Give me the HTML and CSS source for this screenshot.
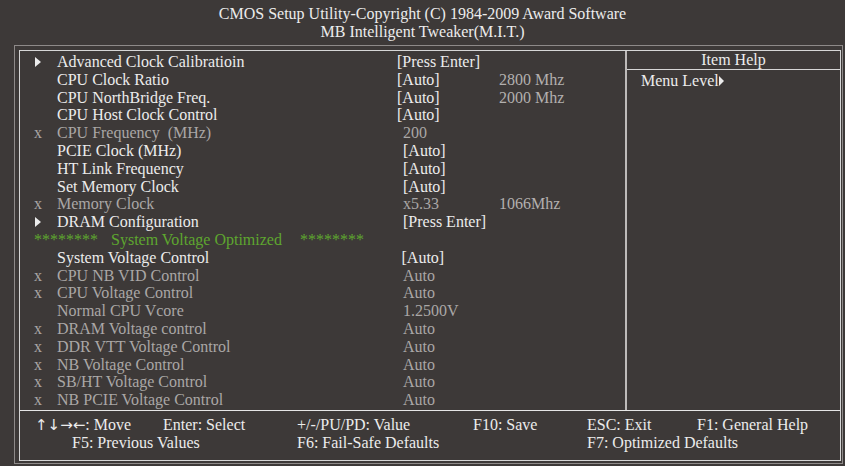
FILE: index.html
```html
<!DOCTYPE html>
<html lang="en">

<head>
    <meta charset="UTF-8">
    <meta name="viewport" content="width=device-width, initial-scale=1.0">
    <title>MB Intelligent Tweaker(M.I.T.)</title>
    <link rel="stylesheet" href="styles.css">
</head>

<body>

    <header class="title">
        <div>CMOS Setup Utility-Copyright (C) 1984-2009 Award Software</div>
        <div>MB Intelligent Tweaker(M.I.T.)</div>
    </header>

    <div class="frame">
        <div class="panel">
            <div class="body">
                <div class="menu">
                    <div class="row"><span class="mark"><svg class="arrow" viewBox="0 0 6 10"><polygon points="0,0 6,5 0,10" /></svg></span><span>Advanced Clock Calibratioin</span><span>[Press Enter]</span><span></span></div>
                    <div class="row"><span class="mark"></span><span>CPU Clock Ratio</span><span>[Auto]</span><span class="info">2800 Mhz</span></div>
                    <div class="row"><span class="mark"></span><span>CPU NorthBridge Freq.</span><span>[Auto]</span><span class="info">2000 Mhz</span></div>
                    <div class="row"><span class="mark"></span><span>CPU Host Clock Control</span><span>[Auto]</span><span></span></div>
                    <div class="row off"><span class="mark">x</span><span>CPU Frequency&nbsp;&nbsp;(MHz)</span><span class="in">200</span><span></span></div>
                    <div class="row"><span class="mark"></span><span>PCIE Clock (MHz)</span><span class="in">[Auto]</span><span></span></div>
                    <div class="row"><span class="mark"></span><span>HT Link Frequency</span><span class="in">[Auto]</span><span></span></div>
                    <div class="row"><span class="mark"></span><span>Set Memory Clock</span><span class="in">[Auto]</span><span></span></div>
                    <div class="row off"><span class="mark">x</span><span>Memory Clock</span><span class="in">x5.33</span><span class="info">1066Mhz</span></div>
                    <div class="row"><span class="mark"><svg class="arrow" viewBox="0 0 6 10"><polygon points="0,0 6,5 0,10" /></svg></span><span>DRAM Configuration</span><span class="in">[Press Enter]</span><span></span></div>
                    <div class="row section"><span class="stars">********</span><span class="section-name">System Voltage Optimized</span><span class="stars">********</span></div>
                    <div class="row"><span class="mark"></span><span>System Voltage Control</span><span class="in-sm">[Auto]</span><span></span></div>
                    <div class="row off"><span class="mark">x</span><span>CPU NB VID Control</span><span class="in">Auto</span><span></span></div>
                    <div class="row off"><span class="mark">x</span><span>CPU Voltage Control</span><span class="in">Auto</span><span></span></div>
                    <div class="row off"><span class="mark"></span><span>Normal CPU Vcore</span><span class="in">1.2500V</span><span></span></div>
                    <div class="row off"><span class="mark">x</span><span>DRAM Voltage control</span><span class="in">Auto</span><span></span></div>
                    <div class="row off"><span class="mark">x</span><span>DDR VTT Voltage Control</span><span class="in">Auto</span><span></span></div>
                    <div class="row off"><span class="mark">x</span><span>NB Voltage Control</span><span class="in">Auto</span><span></span></div>
                    <div class="row off"><span class="mark">x</span><span>SB/HT Voltage Control</span><span class="in">Auto</span><span></span></div>
                    <div class="row off"><span class="mark">x</span><span>NB PCIE Voltage Control</span><span class="in">Auto</span><span></span></div>
                </div>

                <div class="help">
                    <div class="help-title">Item Help</div>
                    <div class="help-text">Menu Level<svg class="level" viewBox="0 0 5 10"><polygon points="0,0 5,5 0,10" /></svg></div>
                </div>
            </div>

            <div class="keys">
                <span><span class="arrows">&uarr;&darr;&rarr;&larr;</span>: Move</span>
                <span>Enter: Select</span>
                <span>+/-/PU/PD: Value</span>
                <span>F10: Save</span>
                <span>ESC: Exit</span>
                <span>F1: General Help</span>
                <span class="key-f5">F5: Previous Values</span>
                <span class="key-f6">F6: Fail-Safe Defaults</span>
                <span class="key-f7">F7: Optimized Defaults</span>
            </div>
        </div>
    </div>

</body>

</html>
```

FILE: styles.css
```css
body {
    margin: 0;
    background-color: #3d3938;
    color: #ececec;
    font-family: "Liberation Serif", "Times New Roman", serif;
    font-size: 16px;
}

.title {
    height: 45px;
    box-sizing: border-box;
    padding-top: 5px;
    text-align: center;
    line-height: 18px;
}

/* Moldura dupla */
.frame {
    margin-left: 14px;
    width: 829px;
    height: 419px;
    box-sizing: border-box;
    border: 1px solid #8e8a89;
    padding: 4px 1px 2px 4px;
}

.panel {
    height: 100%;
    box-sizing: border-box;
    border: 1px solid #d6d6d6;
    display: flex;
    flex-direction: column;
}

.body {
    display: flex;
    height: 359px;
}

.menu {
    width: 605px;
    padding-top: 2px;
}

.row {
    display: grid;
    grid-template-columns: 23px 340px 102px auto;
    padding-left: 14px;
    height: 17.8px;
    line-height: 17.8px;
    white-space: nowrap;
}

.row.off {
    color: #aaa7a6;
}

.info {
    color: #b3b0af;
}

.in {
    padding-left: 6px;
}

.in-sm {
    padding-left: 4.5px;
}

.mark {
    display: flex;
    align-items: center;
}

.arrow {
    width: 6px;
    height: 10px;
    margin-left: 1px;
    fill: #ececec;
}

.section {
    display: flex;
    color: #5ea62f;
}

.section-name {
    margin: 0 18px 0 13px;
}

.help {
    flex: 1;
    border-left: 2px solid #bdbab9;
}

.help-title {
    height: 18px;
    line-height: 18px;
    text-align: center;
    border-bottom: 1px solid #d6d6d6;
}

.help-text {
    padding: 2px 0 0 14px;
    line-height: 18px;
}

.level {
    width: 5px;
    height: 10px;
    fill: #ececec;
}

/* Barra de teclas */
.keys {
    flex: 1;
    border-top: 1px solid #e6e6e6;
    padding: 5px 0 0 15px;
    display: grid;
    grid-template-columns: 128px 134px 176px 114px 110px 1fr;
    grid-auto-rows: 18px;
    line-height: 18px;
    white-space: nowrap;
}

.arrows {
    font-family: "DejaVu Sans", sans-serif;
    font-size: 15px;
}

.key-f5 {
    grid-column: 1 / 3;
    padding-left: 37px;
}

.key-f6 {
    grid-column: 3 / 5;
}

.key-f7 {
    grid-column: 5 / 7;
}
```
